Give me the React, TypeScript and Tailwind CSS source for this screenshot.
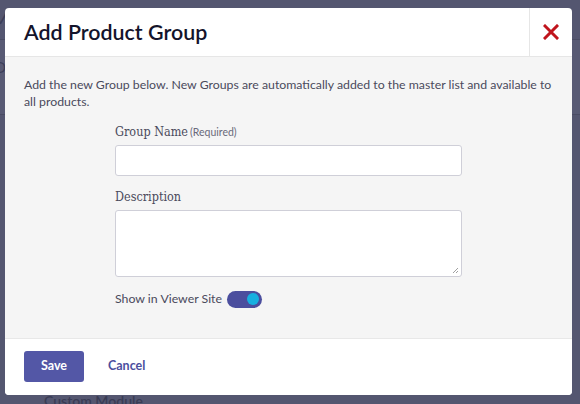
import React from "react";

export default function App() {
  return (
    <div className="relative w-[580px] h-[404px] overflow-hidden bg-[#545670]" style={{ fontFamily: "Lato, 'Noto Sans', sans-serif" }}>
      {/* underlying page (dimmed) */}
      <div className="flex flex-col h-full">
        <div className="h-[40px] border-b border-[#4a4c64] flex items-center text-[#3c3e58] text-[18px]">
          <span className="-ml-[8px]">M</span>
        </div>
        <div className="h-[75px] border-b border-[#4a4c64] bg-[#585a74] flex items-center text-[#3c3e58] text-[16px]">
          <span className="-ml-[6px] mt-[-20px]">D</span>
        </div>
        <div className="flex-1" />
        <div className="h-[16px] pl-[44px] text-[14px] font-semibold text-[#3a3c55] leading-[16px] -mb-[5px]">Custom Module</div>
      </div>

      {/* modal */}
      <div className="absolute left-[5px] top-[8px] w-[567px] h-[387px] bg-white rounded-[4px] flex flex-col overflow-hidden">
        <div className="h-[49px] flex border-b border-[#e6e6e6]">
          <div className="flex-1 flex items-center pl-[19px] text-[21.4px] font-semibold text-[#14142b]">
            Add Product Group
          </div>
          <div className="w-[43px] border-l border-[#e6e6e6] flex items-center justify-center">
            <svg width="16" height="16" viewBox="0 0 16 16">
              <path d="M2 2 L14 14 M14 2 L2 14" stroke="#c0141c" strokeWidth="3" strokeLinecap="square" />
            </svg>
          </div>
        </div>
        <div className="h-[281px] bg-[#f5f5f5] pl-[19px] pr-[16px] pt-[19px]">
          <p className="text-[12.3px] leading-[17px] text-[#4a4a5c]">
            Add the new Group below. New Groups are automatically added to the master list and available to all products.
          </p>
          <div className="ml-[91px] w-[347px] mt-[13px] flex flex-col">
            <label className="h-[18px] flex items-baseline text-[#4a4a5c]">
              <span style={{ fontFamily: "'DejaVu Serif Condensed', 'DejaVu Serif', serif", fontSize: "12.5px" }}>Group Name</span>
              <span className="text-[10.5px] ml-[2px] text-[#6a6a7a]">(Required)</span>
            </label>
            <div className="mt-[4px] h-[31px] bg-white border border-[#cfcfd8] rounded-[3px]" />
            <label className="mt-[12px] h-[18px] text-[#4a4a5c]" style={{ fontFamily: "'DejaVu Serif Condensed', 'DejaVu Serif', serif", fontSize: "12.5px" }}>
              Description
            </label>
            <div className="relative mt-[4px] h-[67px] bg-white border border-[#cfcfd8] rounded-[3px]">
              <svg className="absolute right-[2px] bottom-[2px]" width="7" height="7" viewBox="0 0 7 7">
                <path d="M6 1 L1 6 M6 4 L4 6" stroke="#888" strokeWidth="0.8" />
              </svg>
            </div>
            <div className="mt-[13px] flex items-center gap-[5px]">
              <span className="text-[12.3px] text-[#4a4a5c]">Show in Viewer Site</span>
              <div className="w-[35px] h-[17px] rounded-full bg-[#4b4e9e] flex items-center justify-end pr-[3px]">
                <div className="w-[12px] h-[12px] rounded-full bg-[#17b0e0]" />
              </div>
            </div>
          </div>
        </div>
        <div className="flex-1 border-t border-[#e8e8e8] bg-white flex items-center pl-[19px] pb-[1px]">
          <button className="w-[60px] h-[31px] rounded-[3px] bg-[#5357a6] text-white text-[12.5px] font-bold">Save</button>
          <span className="ml-[24px] text-[12.5px] font-bold text-[#4b4f9e]">Cancel</span>
        </div>
      </div>
    </div>
  );
}
